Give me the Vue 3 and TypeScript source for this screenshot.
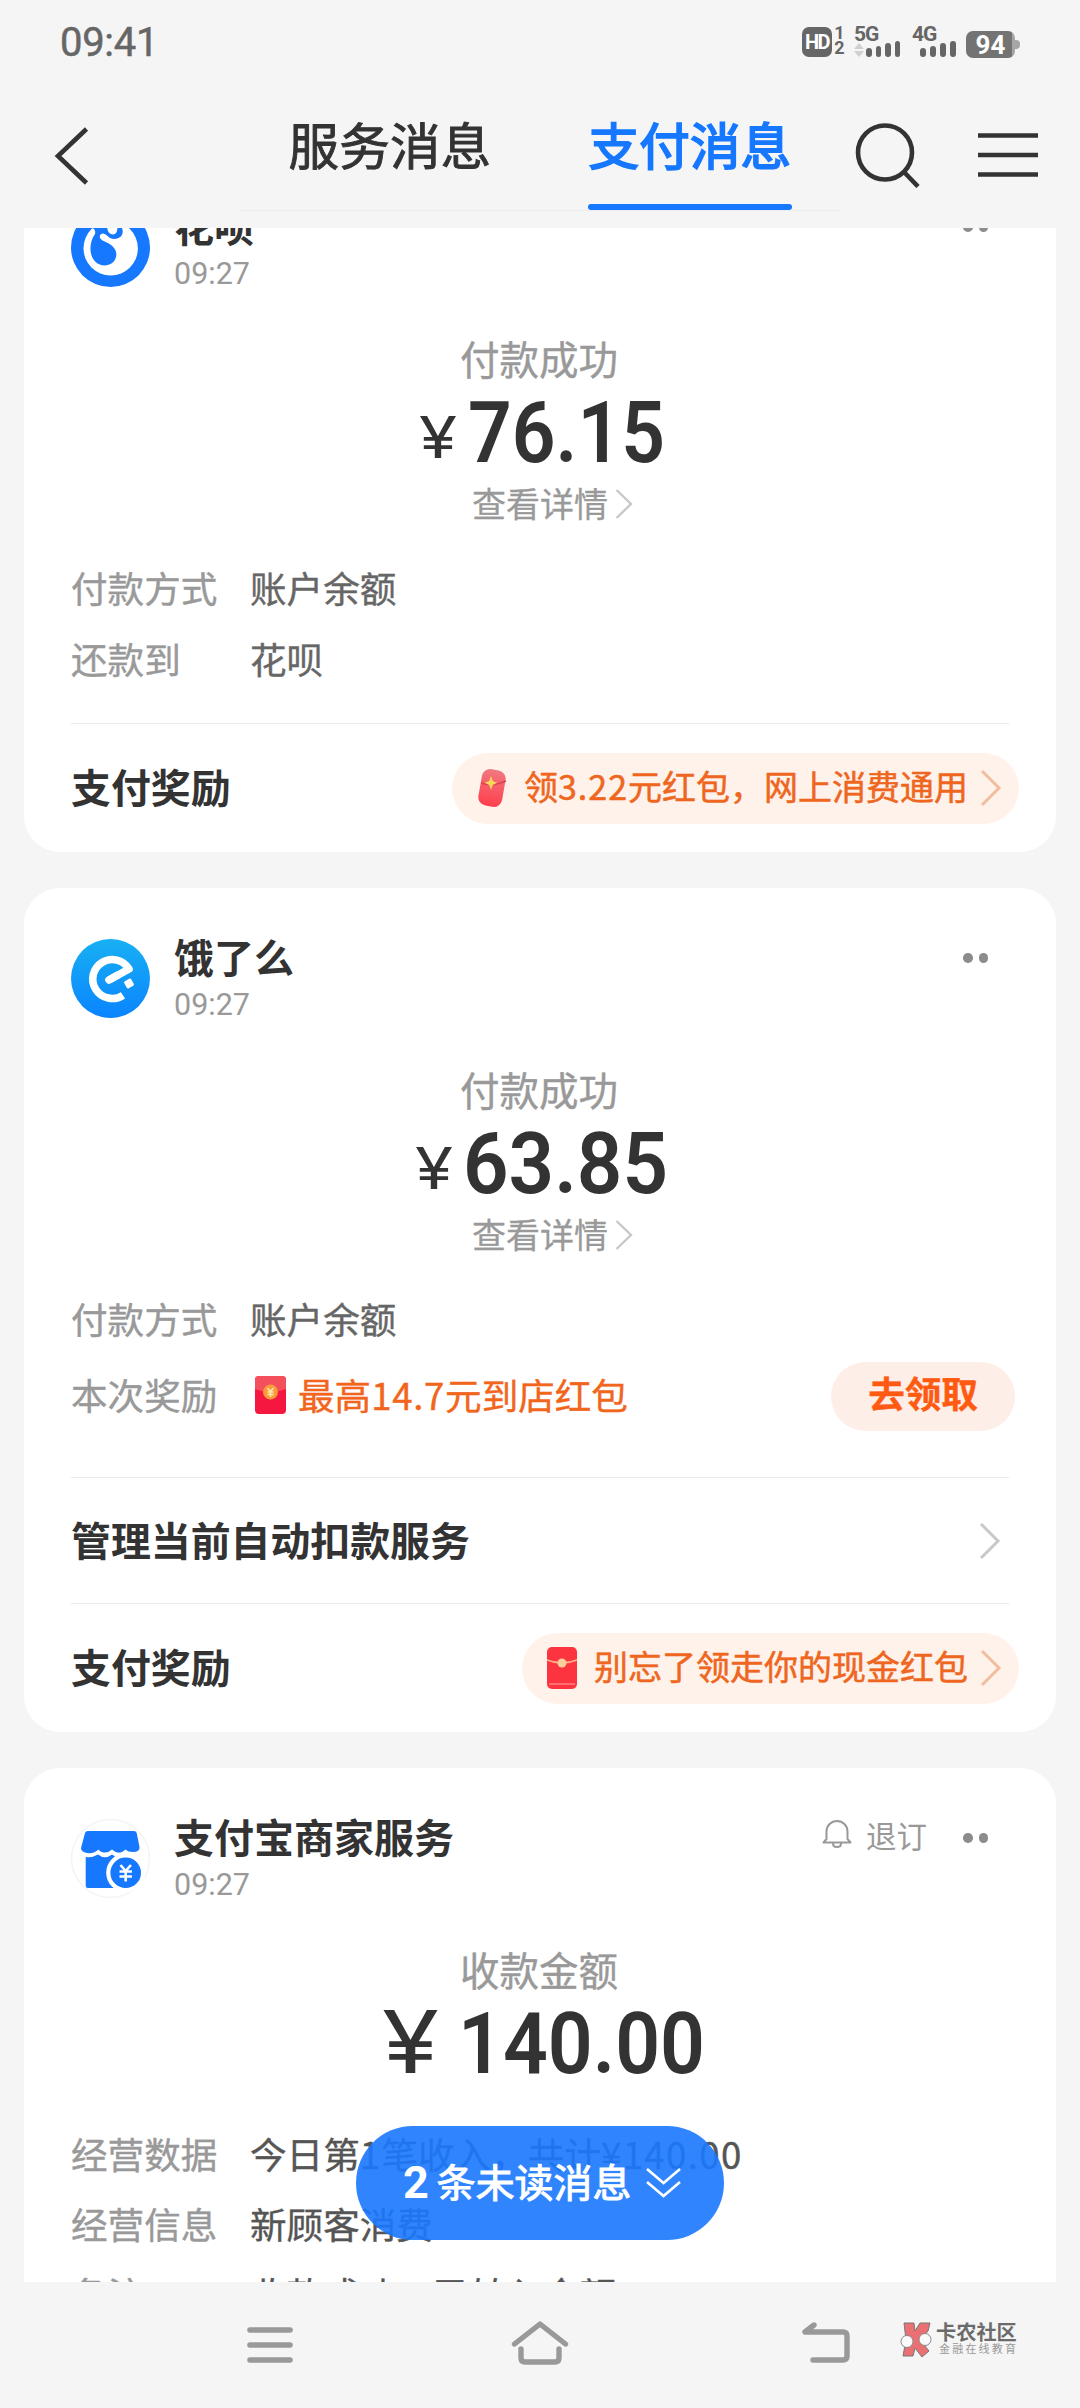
<script setup lang="ts">
interface Row {
  label: string
  value: string
  action?: string
}
interface Amount {
  text: string
  signSize: number
  signWidth: number
  signBase: number
  gap: number
  width: number
}
interface Card {
  id: string
  logo: 'huabei' | 'eleme' | 'merchant'
  name: string
  time: string
  unsubscribe?: boolean
  caption: string
  amount: Amount
  detail?: boolean
  rows: Row[]
  service?: string
  reward?: { icon: 'tilted' | 'upright'; text: string }
}

const cards: Card[] = [
  {
    id: 'a',
    logo: 'huabei',
    name: '花呗',
    time: '09:27',
    caption: '付款成功',
    amount: { text: '76.15', signSize: 58, signWidth: 36, signBase: 67.8, gap: 16, width: 189 },
    detail: true,
    rows: [
      { label: '付款方式', value: '账户余额' },
      { label: '还款到', value: '花呗' },
    ],
    reward: { icon: 'tilted', text: '领3.22元红包，网上消费通用' },
  },
  {
    id: 'b',
    logo: 'eleme',
    name: '饿了么',
    time: '09:27',
    caption: '付款成功',
    amount: { text: '63.85', signSize: 58, signWidth: 36, signBase: 67.8, gap: 15, width: 197 },
    detail: true,
    rows: [
      { label: '付款方式', value: '账户余额' },
      { label: '本次奖励', value: '最高14.7元到店红包', action: '去领取' },
    ],
    service: '管理当前自动扣款服务',
    reward: { icon: 'upright', text: '别忘了领走你的现金红包' },
  },
  {
    id: 'c',
    logo: 'merchant',
    name: '支付宝商家服务',
    time: '09:27',
    unsubscribe: true,
    caption: '收款金额',
    amount: { text: '140.00', signSize: 87, signWidth: 53, signBase: 71.5, gap: 25, width: 239 },
    rows: [
      { label: '经营数据', value: '今日第1笔收入，共计¥140.00' },
      { label: '经营信息', value: '新顾客消费' },
      { label: '备注', value: '收款成功，已转入余额' },
    ],
  },
]
const bars = [9, 11, 14, 16]

// Odd entries are the numeric runs, which are tracked a little wider.
const pieces = (text: string): string[] => text.split(/([¥\d.]+)/)
</script>

<template>
  <div class="screen">
    <div class="status">
      <span class="clock">09:41</span>
      <div class="indicators">
        <span class="hd">HD</span>
        <span class="sims"><i>1</i><i>2</i></span>
        <div class="signal">
          <b>5G</b>
          <div class="bars">
            <svg class="updown" width="10" height="14" viewBox="0 0 10 14"><path d="M0 6L5 0l5 6zM0 8l5 6 5-6z" fill="#d0d0d0" /></svg>
            <i v-for="h in bars" :key="h" :style="{ height: h + 'px' }"></i>
          </div>
        </div>
        <div class="signal second">
          <b>4G</b>
          <div class="bars"><i v-for="h in bars" :key="h" :style="{ height: h + 'px' }"></i></div>
        </div>
        <div class="battery"><span>94</span></div>
        <span class="nub"></span>
      </div>
    </div>

    <header class="bar">
      <svg class="back" width="36" height="60" viewBox="0 0 36 60"><path d="M33.500 3L5 30l28.500 27" fill="none" stroke="#333" stroke-width="4.600" /></svg>
      <nav class="tabs">
        <div class="tab">服务消息</div>
        <div class="tab active">支付消息</div>
      </nav>
      <svg class="search" width="66" height="68" viewBox="0 0 66 68"><circle cx="31" cy="32.500" r="27" fill="none" stroke="#333" stroke-width="4.600" /><path d="M50 52l14 14.500" stroke="#333" stroke-width="4.600" /></svg>
      <svg class="menu" width="60" height="44" viewBox="0 0 60 44"><path d="M0 2.500h60M0 22h60M0 41.500h60" stroke="#333" stroke-width="4.600" /></svg>
    </header>

    <main class="viewport">
      <div class="list">
        <section v-for="card in cards" :key="card.id" class="card">
          <div class="head">
            <svg v-if="card.logo === 'huabei'" class="logo" viewBox="0 0 79 79">
              <circle cx="39.500" cy="39.500" r="39.500" fill="#1677ff" />
              <circle cx="39.700" cy="40.300" r="27.200" fill="#fff" />
              <path d="M17 10L15 24Q17 20 21 20Q25 21 24 26C16 37 18 57 34 57.500C45 57 48 46 43 40C39 34 31 34 29 30Q28 26 32 25.500C36 26 38 31 43 31C51 31 53 25 51 20V8Z" fill="#1677ff" />
              <path d="M36 19Q37 26.500 42 26.500Q46 26.500 46.500 20V12H36Z" fill="#fff" />
            </svg>
            <svg v-else-if="card.logo === 'eleme'" class="logo" viewBox="0 0 79 79">
              <defs><linearGradient id="sky" x1="0" y1="0" x2="0" y2="1"><stop offset="0" stop-color="#18b0f3" /><stop offset="1" stop-color="#0a84ff" /></linearGradient></defs>
              <circle cx="39.500" cy="39.500" r="39.500" fill="url(#sky)" />
              <path d="M38 41L58 30A19.500 19.500 0 1 0 52 56.300" fill="none" stroke="#fff" stroke-width="7.600" stroke-linejoin="round" />
              <path d="M38 41l8-4.500" stroke="#fff" stroke-width="7.600" stroke-linecap="round" />
              <rect x="54" y="40.500" width="8" height="8" rx="1.500" fill="#fff" transform="rotate(-30 58 44.500)" />
            </svg>
            <svg v-else class="logo" viewBox="0 0 79 79">
              <circle cx="39.500" cy="39.500" r="39" fill="#fff" stroke="#f4f4f4" stroke-width="1.500" />
              <path d="M17 12H63Q65 12 65.700 14L68.500 28Q69 33 62 33Q57 33 54.500 30.500Q48 37 41 30.500Q36 35 31 33Q29 32.500 27.500 30.500Q23 35 16 34Q10 33 10 29L14 14Q14.700 12 17 12Z" fill="#1677ff" />
              <path d="M14.700 38Q21 39 27 35.500Q34 41 41 35.500L45 38V69H17Q14.700 69 14.700 66.500Z" fill="#1677ff" />
              <circle cx="54.700" cy="53.700" r="19.500" fill="#fff" />
              <circle cx="54.700" cy="53.700" r="15.300" fill="#1677ff" />
              <path d="M49.500 46l5.200 6 5.200-6M54.700 52v10.500M48.500 52.500h12.400M48.500 57.500h12.400" fill="none" stroke="#fff" stroke-width="2.600" />
            </svg>
            <div class="who">
              <div class="name">{{ card.name }}</div>
              <div class="time">{{ card.time }}</div>
            </div>
            <div v-if="card.unsubscribe" class="unsub">
              <svg width="30" height="30" viewBox="0 0 30 30" fill="none" stroke="#999" stroke-width="2"><path d="M4.500 20V12.500A10.500 10.500 0 0 1 25.500 12.500V20L28.500 23.500H1.500ZM11 24.500Q11 28 15 28Q19 28 19 24.500" stroke-linejoin="round" /></svg>
              <span>退订</span>
            </div>
            <div class="more"><i></i><i></i></div>
          </div>
          <div class="caption">{{ card.caption }}</div>
          <div class="amount" :class="{ shifted: card.unsubscribe }">
            <svg :width="card.amount.signWidth + card.amount.gap + card.amount.width" height="84">
              <g :transform="`translate(${card.amount.signWidth / 2} ${card.amount.signBase}) scale(1.19 1)`">
                <text class="sign" :font-size="card.amount.signSize" text-anchor="middle">¥</text>
              </g>
              <text
                class="figure"
                :x="card.amount.signWidth + card.amount.gap - 4"
                y="71.5"
                :textLength="card.amount.width + 8"
                lengthAdjust="spacingAndGlyphs"
              >{{ card.amount.text }}</text>
            </svg>
          </div>
          <div v-if="card.detail" class="detail">
            <span>查看详情</span>
            <svg width="18" height="30" viewBox="0 0 18 30"><path d="M1.500 1l14.500 14L1.500 29" fill="none" stroke="#c8c8c8" stroke-width="2.400" /></svg>
          </div>
          <div class="rows" :class="{ tight: !card.detail, roomy: card.service }">
            <div v-for="row in card.rows" :key="row.label" class="row" :class="{ prize: row.action }">
              <span class="label">{{ row.label }}</span>
              <svg v-if="row.action" class="packet" width="31" height="38" viewBox="0 0 31 38">
                <rect width="31" height="38" rx="4" fill="#f5173f" />
                <path d="M0 13V4Q0 0 4 0H27Q31 0 31 4V13Q15.500 19 0 13Z" fill="#f4505c" />
                <circle cx="15.500" cy="16" r="7.500" fill="#fb9a3c" />
                <path d="M12.500 12l3 3.500 3-3.500M15.500 15v6M12.500 16h6M12.500 18.500h6" fill="none" stroke="#ffe9a8" stroke-width="1.500" />
              </svg>
              <span class="value"><template v-for="(piece, n) in pieces(row.value)" :key="n"><em v-if="n % 2">{{ piece }}</em><template v-else>{{ piece }}</template></template></span>
              <span v-if="row.action" class="action">{{ row.action }}</span>
            </div>
          </div>
          <div v-if="card.service" class="foot service">
            <span>{{ card.service }}</span>
            <svg width="22" height="38" viewBox="0 0 22 38"><path d="M2 2l17 17L2 36" fill="none" stroke="#c8c8c8" stroke-width="3" /></svg>
          </div>
          <div v-if="card.reward" class="foot">
            <span>支付奖励</span>
            <div class="coupon">
              <svg v-if="card.reward.icon === 'tilted'" width="32" height="40" viewBox="0 0 32 40">
                <defs><linearGradient id="rose" x1="0" y1="0" x2="0" y2="1"><stop offset="0" stop-color="#f07880" /><stop offset="1" stop-color="#ff3f4c" /></linearGradient></defs>
                <rect x="4" y="1.500" width="24" height="37" rx="8.500" fill="url(#rose)" transform="rotate(10 16 20)" />
                <path d="M5 15Q16 19 30 13" fill="none" stroke="#d94352" stroke-width="1.500" />
                <path d="M15 8l1.700 5 4.500 1.700-4.500 2.200-1.700 5-1.700-5-4.500-2.200 4.500-1.700z" fill="#ffd65c" />
              </svg>
              <svg v-else width="32" height="44" viewBox="0 0 32 44">
                <rect x="1" y="1" width="30" height="42" rx="5" fill="#fb3440" />
                <path d="M3 38H29" stroke="#ff6f70" stroke-width="2" />
                <path d="M1 14Q16 20 31 14" fill="none" stroke="#ffb08c" stroke-width="1.800" />
                <circle cx="16" cy="17" r="4.500" fill="#ffcf9a" />
              </svg>
              <span><template v-for="(piece, n) in pieces(card.reward.text)" :key="n"><em v-if="n % 2">{{ piece }}</em><template v-else>{{ piece }}</template></template></span>
              <svg class="go" width="22" height="38" viewBox="0 0 22 38"><path d="M2 2l17 17L2 36" fill="none" stroke="#f2bd9d" stroke-width="3" /></svg>
            </div>
          </div>
        </section>
      </div>
      <div class="unread">
        <b>2</b><span>条未读消息</span>
        <svg width="35" height="32" viewBox="0 0 35 32" fill="none" stroke="#fff" stroke-width="2.600"><path d="M1 2l16.500 14L34 2M1 15l16.500 14L34 15" /></svg>
      </div>
    </main>

    <footer class="sysnav">
      <svg class="recent" width="46" height="38" viewBox="0 0 46 38"><path d="M3 4h40M3 19h40M3 34h40" stroke="#999" stroke-width="5.600" stroke-linecap="round" /></svg>
      <svg class="home" width="58" height="46" viewBox="0 0 58 46" fill="none" stroke="#999" stroke-width="5.400" stroke-linecap="round" stroke-linejoin="round"><path d="M3.500 24L29 4l25.500 20M10 29v9q0 4 4 4h30q4 0 4-4v-9" /></svg>
      <svg class="return" width="50" height="46" viewBox="0 0 50 46" fill="none" stroke="#999" stroke-width="5.400" stroke-linecap="round" stroke-linejoin="round"><path d="M13 5L4 12H42q4 0 4 4V36q0 4-4 4H12" /></svg>
      <div class="brand">
        <svg width="34" height="36" viewBox="0 0 34 36">
          <path d="M5 1H15L16 9L21 1H31L29 9L21 18L30 29L23 35L16 26L14 34H4L7 18Z" fill="#ea7073" stroke="#777" stroke-width="1" />
          <circle cx="8" cy="19.500" r="6" fill="#fafafa" stroke="#888" /><circle cx="26" cy="17.500" r="6" fill="#fafafa" stroke="#888" />
        </svg>
        <div class="brandtext"><strong>卡农社区</strong><small>金融在线教育</small></div>
      </div>
    </footer>
  </div>
</template>

<style>
body { background: #f5f5f5; }
</style>

<style scoped>
.screen {
  width: 1080px;
  height: 2408px;
  overflow: hidden;
  background: #f5f5f5;
  color: #333;
  font-family: "Noto Sans CJK SC", "Noto Sans", sans-serif;
  display: flex;
  flex-direction: column;
}
svg { display: block; flex: none; }
i, em { font-style: normal; }

.status {
  height: 84px;
  display: flex;
  justify-content: space-between;
  padding: 0 60px;
  font-family: Roboto, sans-serif;
  color: #666;
}
.clock { font-size: 40px; line-height: 86px; letter-spacing: -0.300px; -webkit-text-stroke: 0.500px currentColor; }
.indicators { display: flex; height: 30px; margin-top: 27px; }
.hd {
  width: 30px; height: 30px; border-radius: 7px; background: #666; color: #fff;
  font-size: 20px; font-weight: 700; line-height: 31px; text-align: center; letter-spacing: -1.500px;
}
.sims { width: 13px; margin-left: 1px; display: flex; flex-direction: column; align-items: center; font-size: 18px; font-weight: 700; }
.sims i { line-height: 12px; height: 17px; }
.signal { width: 46px; margin-left: 8px; display: flex; flex-direction: column; }
.signal b { font-size: 21px; line-height: 15px; height: 14px; letter-spacing: -1px; }
.signal.second { margin-left: 12px; width: 45px; }
.bars { display: flex; height: 16px; align-items: flex-end; justify-content: flex-end; gap: 4px; }
.bars i { width: 6px; border-radius: 3px; background: #666; }
.second .bars { padding-right: 1px; }
.updown { margin-right: -2px; }
.battery {
  width: 49px; height: 27px; margin: 4px 0 0 9px; border-radius: 7px; color: #fff;
  background: linear-gradient(90deg, #737373 94%, #a6a6a6 94%);
}
.battery span { display: block; text-align: center; font-weight: 700; font-size: 26px; line-height: 28px; }
.nub { width: 5px; height: 9px; margin-top: 13px; border-radius: 0 4px 4px 0; background: #a6a6a6; }

.bar { height: 144px; display: flex; flex: none; }
.back { margin: 42px 0 0 53px; }
.tabs { margin-left: 151px; width: 600px; height: 126px; display: flex; border-bottom: 1px solid #ededed; }
.tab {
  width: 204px; margin-left: 48px; height: 126px; text-align: center; font-size: 50.500px; line-height: 119px;
  letter-spacing: 0.300px; -webkit-text-stroke: 0.900px currentColor;
  display: flex; flex-direction: column; align-items: center;
}
.tab.active { margin-left: 96px; color: #1677ff; -webkit-text-stroke: 1.800px currentColor; }
.tab.active::after { content: ""; width: 204px; height: 6px; border-radius: 3px; background: #1677ff; margin-top: 1px; }
.search { margin: 36px 0 0 14px; }
.menu { margin: 49px 0 0 58px; }

.viewport { position: relative; height: 2054px; flex: none; overflow: hidden; }
.list { margin-top: -71px; padding: 0 24px; display: flex; flex-direction: column; gap: 36px; }
.card { background: #fff; border-radius: 36px; padding: 0 47px; }
.card:last-child { height: 700px; }
.head { display: flex; padding-top: 51px; height: 79px; }
.logo { width: 79px; height: 79px; }
.who { margin-left: 24px; flex: 1; }
.name { font-size: 40px; font-weight: 600; line-height: 40px; margin-top: -3px; }
.time { font-size: 30.500px; line-height: 34px; margin-top: 12px; color: #999; font-family: Roboto, sans-serif; }
.unsub { display: flex; margin-right: 36px; height: 40px; color: #999; font-size: 30.500px; line-height: 33px; }
.unsub svg { margin: 0 14px 0 0; }
.more { display: flex; gap: 6px; margin: 14px 21px 0 0; }
.more i { width: 9.500px; height: 9.500px; border-radius: 50%; background: #8c8c8c; }
.caption { margin-top: 43px; height: 60px; line-height: 56px; text-align: center; font-size: 39.500px; color: #999; text-indent: -2px; -webkit-text-stroke: 0.400px currentColor; }
.amount { height: 84px; display: flex; justify-content: center; }
.amount.shifted { padding-left: 5px; }
.amount svg { overflow: visible; }
.sign { font-family: Inter, sans-serif; font-weight: 400; fill: #333; }
.figure { font-family: Roboto, sans-serif; font-size: 84.500px; font-weight: 600; fill: #333; }
.detail { height: 60px; display: flex; align-items: center; padding-left: 401px; color: #999; font-size: 34px; -webkit-text-stroke: 0.300px currentColor; }
.detail span { line-height: 56px; margin-top: -3px; }
.detail svg { margin-left: 7px; }
.rows { padding: 20px 0 27px; -webkit-text-stroke: 0.400px currentColor; }
.rows.tight { padding-top: 35px; }
.rows.roomy { padding-bottom: 41px; }
.row { height: 71px; display: flex; align-items: center; font-size: 36.600px; }
.tight .row { height: 70px; }
.row.prize { height: 80px; color: #f2651c; }
.label { width: 179px; color: #999; line-height: 60px; margin-top: -3px; }
.value { color: #666; line-height: 60px; margin-top: -3px; }
.tight .value { color: #555; }
em { letter-spacing: 1.400px; }
.prize .value { color: inherit; flex: 1; margin-left: 12px; }
.prize em { letter-spacing: 0.700px; }
.packet { margin-left: 5px; margin-top: -3px; }
.action {
  width: 184px; height: 69px; margin: 0 -6px 0 0; border-radius: 35px; background: #feeee8;
  color: #ff5a12; font-weight: 700; line-height: 61px; text-align: center;
}
.foot {
  border-top: 1px solid #e9e9e9; height: 128px; display: flex; align-items: center;
  justify-content: space-between; font-size: 39.900px; font-weight: 600;
}
.foot > span { line-height: 60px; margin-top: -4px; }
.service { height: 125px; }
.service svg { margin-right: 8px; }
.coupon {
  height: 71px; margin-right: -10px; padding: 0 17px 0 24px; border-radius: 36px; background: #fff2ea; color: #ee6620;
  display: flex; align-items: center; font-size: 34px; font-weight: 400; -webkit-text-stroke: 0.500px currentColor;
}
.coupon span { margin: -4px 12px 0 16px; line-height: 60px; }
.coupon em { letter-spacing: 1px; }

.unread {
  position: absolute; left: 356px; top: 1898px; width: 368px; height: 114px; border-radius: 57px;
  background: rgba(27, 121, 255, 0.91); color: #fff; display: flex; align-items: center; box-sizing: border-box;
  padding-left: 47px; font-size: 38.900px; line-height: 60px; -webkit-text-stroke: 1px currentColor;
}
.unread b { font-family: Roboto, sans-serif; font-size: 45px; font-weight: 700; margin-right: 8px; -webkit-text-stroke: 0; }
.unread span { margin-top: -6px; }
.unread svg { margin-left: 15px; }

.sysnav { display: flex; height: 126px; }
.recent { margin: 44px 0 0 247px; }
.home { margin: 38px 0 0 218px; }
.return { margin: 38px 0 0 232px; }
.brand { display: flex; margin: 40px 0 0 48px; }
.brandtext { margin-left: 3px; display: flex; flex-direction: column; }
.brandtext strong { font-size: 20.200px; line-height: 20px; color: #6b6b6b; font-weight: 700; white-space: nowrap; }
.brandtext small { font-size: 11px; line-height: 14px; letter-spacing: 2.200px; color: #999; margin: -1px 0 0 3px; white-space: nowrap; }
</style>
